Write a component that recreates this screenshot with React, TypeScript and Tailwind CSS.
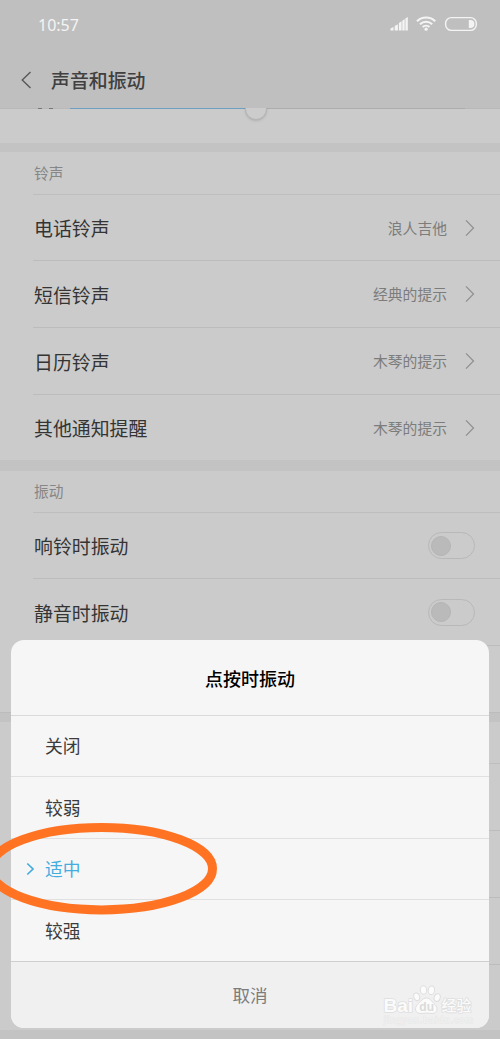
interface SettingRowProps {
  label?: string
  value?: string
  toggle?: boolean
  className: string
}

const ringtones = [
  { label: '电话铃声', value: '浪人吉他', className: 'h-[66px] border-b' },
  { label: '短信铃声', value: '经典的提示', className: 'h-[67px] border-b' },
  { label: '日历铃声', value: '木琴的提示', className: 'h-[67px] border-b' },
  { label: '其他通知提醒', value: '木琴的提示', className: 'h-[65px]' },
]

const vibrations = [
  { label: '响铃时振动', toggle: true, className: 'h-[66px] border-b' },
  { label: '静音时振动', toggle: true, className: 'h-[67px] border-b' },
  { className: 'h-[66px]' },
]

const options = [
  { id: 'off', name: '关闭', className: 'h-[61px]' },
  { id: 'weak', name: '较弱', className: 'h-[62px]' },
  { id: 'medium', name: '适中', className: 'h-[61px]' },
  { id: 'strong', name: '较强', className: 'h-[62px]' },
]

function StatusBar() {
  return (
    <div className="flex h-[49px] items-center justify-between pl-[38px] pr-[23px] text-[#f4f4f4]">
      <span className="font-['Noto_Sans'] text-[16px] leading-none">10:57</span>
      <svg width="88" height="18" viewBox="0 0 88 18" fill="none" className="-mt-px">
        {/* Signal */}
        <g fill="currentColor">
          <path d="M1.500 15.500v-2l3-1.500v3.500z" />
          <path d="M5.700 15.500v-4.500l3.200-1.800v6.300z" />
          <path d="M9.900 15.500v-7.500l2.700-1.700v9.200z" />
          <path d="M13.300 15.500v-9.800l2.400-1.600v11.400z" />
          <path d="M16.400 15.500v-12l2.400-1.600v13.600z" />
        </g>
        {/* Wifi */}
        <g stroke="currentColor" strokeWidth="2.100">
          <path d="M28 6.200a13 13 0 0 1 18.200 0" />
          <path d="M31 9.300a8.700 8.700 0 0 1 12.200 0" />
          <path d="M33.700 12.100a4.900 4.900 0 0 1 6.800 0" />
        </g>
        <circle cx="37.100" cy="14.200" r="1.600" fill="currentColor" />
        {/* Battery */}
        <rect x="56.600" y="2.600" width="30.700" height="12.800" rx="5.800" stroke="currentColor" strokeWidth="1.400" />
        <path d="M79.800 5h1.600a4 4 0 0 1 0 8h-1.600z" fill="currentColor" />
      </svg>
    </div>
  )
}

function Chevron() {
  return (
    <svg width="10" height="18" viewBox="0 0 10 18" fill="none" stroke="#8f8f8f" strokeWidth="1.200">
      <path d="M1 1.300 8.500 9 1 16.700" />
    </svg>
  )
}

function SettingRow({ label, value, toggle, className }: SettingRowProps) {
  return (
    <div className={`ml-[33px] flex items-center justify-between border-[#bcbcbc] pl-px pr-[25px] ${className}`}>
      <span className="pt-[2px] text-[18.9px] text-[#343434]">{label}</span>
      {value && (
        <div className="flex items-center gap-[18px]">
          <span className="pt-px text-[14.8px] text-[#7c7c7c]">{value}</span>
          <Chevron />
        </div>
      )}
      {toggle && (
        <div className="flex h-[27px] w-[47px] items-center rounded-full border border-[#b8b8b8] pl-[2px]">
          <div className="h-[20px] w-[20px] rounded-full border border-[#b5b5b5] bg-[#bababa]" />
        </div>
      )}
    </div>
  )
}

function SectionTitle({ title, className }: { title?: string; className: string }) {
  return (
    <div className={`ml-[33px] flex items-center border-b border-[#bebebe] pl-px text-[14.7px] text-[#868686] ${className}`}>
      {title}
    </div>
  )
}

function Watermark() {
  return (
    <svg width="96" height="46" viewBox="0 0 96 46" fill="#fbfbfb" stroke="#dedede" strokeWidth="1">
      <path d="M45.500 16c4 0 5 3.500 8.500 6.500 3.500 3.500 2.500 9-3 9-2 0-3.500-.5-5.500-.5s-3.500.5-5.500.5c-6 0-7-5.500-3.500-9 3.500-3 5-6.500 9-6.500z" />
      <ellipse cx="35.700" cy="14.800" rx="2.900" ry="3.900" transform="rotate(-18 35.700 14.800)" />
      <ellipse cx="42.500" cy="8" rx="3.200" ry="4.300" transform="rotate(-5 42.500 8)" />
      <ellipse cx="50.400" cy="8.300" rx="3.200" ry="4.300" transform="rotate(8 50.400 8.300)" />
      <ellipse cx="56.200" cy="15.600" rx="3" ry="3.900" transform="rotate(18 56.200 15.600)" />
      <g className="[paint-order:stroke]" strokeWidth="1.600" strokeLinejoin="round" fontFamily="Liberation Sans, sans-serif">
        <text x="2.500" y="30" fontSize="19" fontWeight="bold">Bai</text>
        <text x="60.500" y="29" fontSize="15" fontWeight="500" fontFamily="Noto Sans CJK SC, sans-serif">经验</text>
        <text x="3" y="41" fontSize="9" textLength="89" fill="#f3f3f3" stroke="#e6e6e6" strokeWidth="1">jingyan.baidu.com</text>
      </g>
      <text x="38.300" y="28.500" fontSize="12" fontWeight="bold" fontFamily="Liberation Sans, sans-serif" fill="#dadada" stroke="none">du</text>
    </svg>
  )
}

function VibrationDialog({ selected }: { selected: string }) {
  return (
    <div className="absolute left-[11px] top-[640px] w-[478px] overflow-hidden rounded-[13px] bg-[#f6f6f6]" role="dialog">
      <h2 className="flex h-[76px] items-center justify-center border-b border-[#dadada] pt-px text-[18px] font-medium text-black">
        点按时振动
      </h2>
      {options.map((option) => {
        const isSelected = option.id === selected

        return (
          <div
            key={option.id}
            className={`flex items-center border-b border-[#e0e0e0] pb-px pl-[15px] text-[17.8px] last-of-type:border-[#cfcfcf] ${option.className} ${isSelected ? 'text-[#46acde]' : 'text-[#3c3c3c]'}`}
          >
            <span className="w-[19px]">
              {isSelected && (
                <svg width="9" height="14" viewBox="0 0 9 14" fill="none" stroke="currentColor" strokeWidth="1.700">
                  <path d="M1.300 1.500 7 7 1.300 12.500" />
                </svg>
              )}
            </span>
            {option.name}
          </div>
        )
      })}
      <button type="button" className="block h-[66px] w-full bg-[#f0f0f0] text-[17.6px] text-[#7c7c7c]">
        取消
      </button>
    </div>
  )
}

export default function App() {
  return (
    <div className="relative h-[1039px] w-[500px] overflow-hidden bg-[#cbcbcb] font-['Noto_Sans_CJK_SC',sans-serif]">
      <header className="h-[108px] bg-[#bfbfbf]">
        <StatusBar />
        <div className="flex h-[62px] items-center pl-[21px]">
          <svg width="11" height="18" viewBox="0 0 11 18" fill="none" stroke="#555555" strokeWidth="1.300" className="-mt-px">
            <path d="M9.500 1 1.200 9 9.500 17" />
          </svg>
          <h1 className="ml-[19px] pt-px text-[18.9px] font-medium text-[#404040]">声音和振动</h1>
        </div>
      </header>

      {/* Volume slider, scrolled under the header */}
      <div className="relative flex h-[35px] items-start overflow-hidden">
        <div className="h-px w-[70px] bg-[#b8b8b8]" />
        <div className="h-px w-[180px] bg-[#6f9fc0]" />
        <div className="h-px w-[215px] bg-[#acacac]" />
        <div className="h-px w-[35px] bg-[#b8b8b8]" />
        <div className="absolute left-[38px] top-0 h-px w-[4px] bg-[#777777]" />
        <div className="absolute left-[49px] top-0 h-px w-[4px] bg-[#777777]" />
        <div className="absolute left-[245px] top-[-10px] h-[22px] w-[22px] rounded-full border border-[#b5b5b5] bg-[#cccccc] shadow-sm" />
      </div>

      <div className="h-[9px] bg-[#c3c3c3]" />
      <SectionTitle title="铃声" className="h-[43px]" />
      {ringtones.map((row) => (
        <SettingRow key={row.label} {...row} />
      ))}

      <div className="h-[11px] bg-[#c3c3c3]" />
      <SectionTitle title="振动" className="h-[42px]" />
      {vibrations.map((row, i) => (
        <SettingRow key={i} {...row} />
      ))}

      <div className="h-[10px] border-t border-[#bcbcbc] bg-[#c3c3c3]" />
      <SectionTitle className="h-[42px]" />
      <SettingRow className="h-[67px] border-b" />
      <SettingRow className="h-[67px] border-b" />
      <SettingRow className="h-[67px] border-b" />
      <SettingRow className="h-[65px]" />
      <div className="h-[9px] bg-[#c3c3c3]" />

      <VibrationDialog selected="medium" />

      <svg width="230" height="100" viewBox="0 0 230 100" fill="none" className="pointer-events-none absolute left-0 top-[819px]">
        <ellipse cx="101.500" cy="49.700" rx="111" ry="41.200" stroke="#ff7323" strokeWidth="9" />
      </svg>

      <div className="absolute bottom-[11px] right-[23px]">
        <Watermark />
      </div>
    </div>
  )
}
